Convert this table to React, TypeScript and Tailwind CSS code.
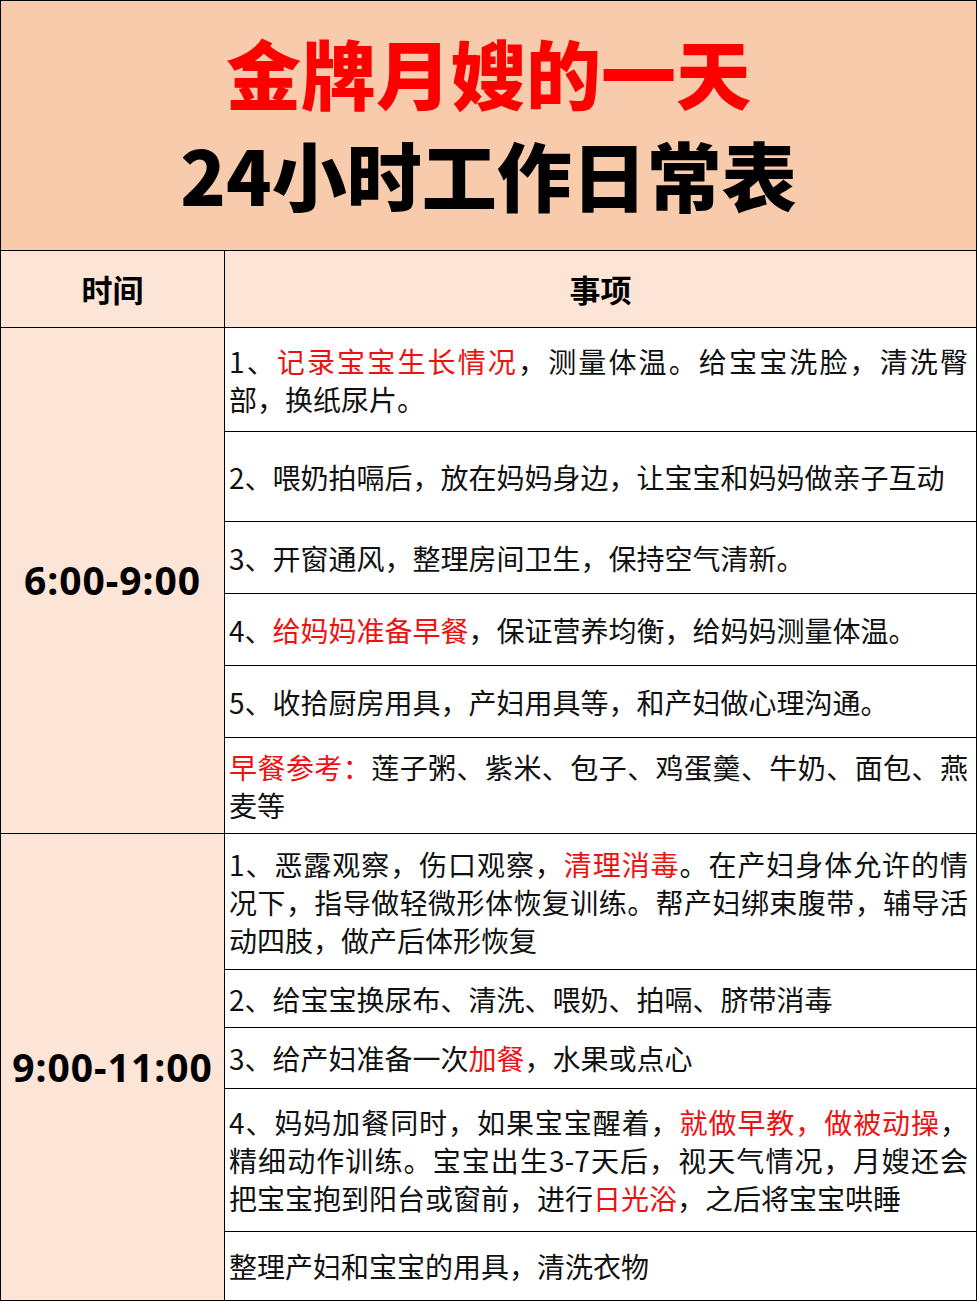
import type { FC, ReactNode } from 'react'

type Seg = string | { red: string }
type Row = { h: string; segs: Seg[]; last?: boolean }

const cjk = "font-['Noto_Sans_CJK_SC',sans-serif]"

const group1: Row[] = [
  { h: 'h-[104px]', segs: ['1、', { red: '记录宝宝生长情况' }, '，测量体温。给宝宝洗脸，清洗臀部，换纸尿片。'] },
  { h: 'h-[90px]', segs: ['2、喂奶拍嗝后，放在妈妈身边，让宝宝和妈妈做亲子互动'] },
  { h: 'h-[72px]', segs: ['3、开窗通风，整理房间卫生，保持空气清新。'] },
  { h: 'h-[72px]', segs: ['4、', { red: '给妈妈准备早餐' }, '，保证营养均衡，给妈妈测量体温。'] },
  { h: 'h-[72px]', segs: ['5、收拾厨房用具，产妇用具等，和产妇做心理沟通。'] },
  { h: 'h-[95px]', segs: [{ red: '早餐参考：' }, '莲子粥、紫米、包子、鸡蛋羹、牛奶、面包、燕麦等'], last: true },
]

const group2: Row[] = [
  {
    h: 'h-[136px]',
    segs: [
      '1、恶露观察，伤口观察，',
      { red: '清理消毒' },
      '。在产妇身体允许的情况下，指导做轻微形体恢复训练。帮产妇绑束腹带，辅导活动四肢，做产后体形恢复',
    ],
  },
  { h: 'h-[58px]', segs: ['2、给宝宝换尿布、清洗、喂奶、拍嗝、脐带消毒'] },
  { h: 'h-[61px]', segs: ['3、给产妇准备一次', { red: '加餐' }, '，水果或点心'] },
  {
    h: 'h-[143px]',
    segs: [
      '4、妈妈加餐同时，如果宝宝醒着，',
      { red: '就做早教，做被动操' },
      '，精细动作训练。宝宝出生3-7天后，视天气情况，月嫂还会把宝宝抱到阳台或窗前，进行',
      { red: '日光浴' },
      '，之后将宝宝哄睡',
    ],
  },
  { h: 'h-[68px]', segs: ['整理产妇和宝宝的用具，清洗衣物'], last: true },
]

const Cell: FC<{ row: Row }> = ({ row }) => (
  <div className={`${row.h} flex items-center pl-[4px] pr-[8px] ${row.last ? '' : 'border-b border-black'}`}>
    <p className={`${cjk} w-full text-[28px] leading-[38px] text-justify text-[#111]`}>
      {row.segs.map((s, i) =>
        typeof s === 'string' ? (
          s
        ) : (
          <span key={i} className="text-[#ee1111]">
            {s.red}
          </span>
        ),
      )}
    </p>
  </div>
)

const Group: FC<{ time: ReactNode; rows: Row[]; bottom?: boolean }> = ({ time, rows, bottom }) => (
  <div className={`flex ${bottom ? 'border-b border-black' : ''}`}>
    <div className="w-[224px] shrink-0 border-r border-black bg-[#fce4d6] flex items-center justify-center">
      <span className="font-['Noto_Sans',sans-serif] font-bold text-[39px] tracking-[1px] text-black">{time}</span>
    </div>
    <div className="flex-1 flex flex-col bg-white">
      {rows.map((r, i) => (
        <Cell key={i} row={r} />
      ))}
    </div>
  </div>
)

const App: FC = () => {
  return (
    <div className="w-[977px] h-[1301px] border border-black bg-white">
      <div className={`${cjk} h-[250px] border-b border-black bg-[#f8cbad] flex flex-col items-center justify-center font-black text-[75px] leading-[102px] pb-[6px]`}>
        <div className="text-[#ff0000]">金牌月嫂的一天</div>
        <div className="text-black">24小时工作日常表</div>
      </div>

      <div className={`${cjk} flex h-[77px] border-b border-black bg-[#fce4d6] font-bold text-[31px] text-black`}>
        <div className="w-[224px] shrink-0 border-r border-black flex items-center justify-center">时间</div>
        <div className="flex-1 flex items-center justify-center">事项</div>
      </div>

      <Group time="6:00-9:00" rows={group1} bottom />
      <Group time="9:00-11:00" rows={group2} />
    </div>
  )
}

export default App
